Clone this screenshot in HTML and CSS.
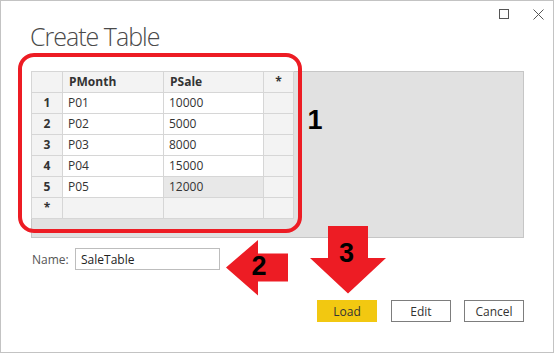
FILE: index.html
```html
<!DOCTYPE html>
<html lang="en">
<head>
    <meta charset="UTF-8">
    <title>Create Table</title>
    <link rel="stylesheet" href="styles.css">
</head>
<body>
    <div class="dialog">
        <div class="titlebar">
            <svg class="win-btn" width="10" height="10" viewBox="0 0 10 10">
                <rect x="0.5" y="0.5" width="9" height="9" fill="none" stroke="#555" stroke-width="1"/>
            </svg>
            <svg class="win-btn" width="11" height="11" viewBox="0 0 11 11">
                <path d="M0.5 0.5 L10.5 10.5 M10.5 0.5 L0.5 10.5" stroke="#555" stroke-width="1"/>
            </svg>
        </div>

        <h1 class="title">Create Table</h1>

        <div class="panel">
            <div class="grid">
                <div class="cell head"></div>
                <div class="cell head col">PMonth</div>
                <div class="cell head col">PSale</div>
                <div class="cell head star">*</div>

                <div class="cell head num">1</div>
                <div class="cell">P01</div>
                <div class="cell">10000</div>
                <div class="cell head"></div>

                <div class="cell head num">2</div>
                <div class="cell">P02</div>
                <div class="cell">5000</div>
                <div class="cell head"></div>

                <div class="cell head num">3</div>
                <div class="cell">P03</div>
                <div class="cell">8000</div>
                <div class="cell head"></div>

                <div class="cell head num">4</div>
                <div class="cell">P04</div>
                <div class="cell">15000</div>
                <div class="cell head"></div>

                <div class="cell head num">5</div>
                <div class="cell">P05</div>
                <div class="cell selected">12000</div>
                <div class="cell head"></div>

                <div class="cell head star">*</div>
                <div class="cell head"></div>
                <div class="cell head"></div>
                <div class="cell head"></div>
            </div>
        </div>

        <div class="name-row">
            <label for="nombre">Name:</label>
            <input type="text" id="nombre" value="SaleTable">
        </div>

        <div class="botones">
            <button type="button" class="btn btn-load">Load</button>
            <button type="button" class="btn">Edit</button>
            <button type="button" class="btn">Cancel</button>
        </div>

        <!-- marcas rojas encima del dialogo -->
        <svg class="marcas" width="555" height="353" viewBox="0 0 555 353">
            <rect x="20" y="55" width="280" height="176" rx="14" ry="14" fill="none" stroke="#ed1c24" stroke-width="4"/>
            <text x="315" y="129" class="numero" text-anchor="middle">1</text>

            <polygon points="226,267.5 258,240 258,253.5 288,253.5 288,281.5 258,281.5 258,295.5" fill="#ed1c24"/>
            <text x="259" y="275" class="numero" text-anchor="middle">2</text>

            <polygon points="328,226 368,226 368,258 386,258 348,293.5 310,258 328,258" fill="#ed1c24"/>
            <text x="346.5" y="262" class="numero" text-anchor="middle">3</text>
        </svg>
    </div>
</body>
</html>
```

FILE: styles.css
```css
body {
    margin: 0;
    font-family: "Open Sans", Arial, sans-serif;
    font-size: 12px;
    color: #333;
    background: #fff;
}

.dialog {
    position: relative;
    width: 554px;
    height: 353px;
    box-sizing: border-box;
    border: 1px solid #c3c3c3;
    background: #fff;
}

.titlebar {
    display: flex;
    justify-content: flex-end;
    align-items: flex-start;
    gap: 24px;
    height: 18px;
    padding: 8px 9px 0 0;
    box-sizing: border-box;
}

.title {
    margin: 1px 0 0 29px;
    font-size: 25px;
    font-weight: 300;
    line-height: 32px;
    color: #4a4a4a;
    letter-spacing: -1px;
}

.panel {
    width: 493px;
    height: 167px;
    margin: 19px 0 0 30px;
    box-sizing: border-box;
    border: 1px solid #c6c6c6;
    background-color: #e1e1e1;
}

.grid {
    display: grid;
    grid-template-columns: 30px 100px 99px 29px;
    grid-auto-rows: 20px;
    gap: 1px;
    padding: 1px;
    margin: -1px 0 0 -1px;
    width: max-content;
    background-color: #d6d6d6;
}

.cell {
    background-color: #fff;
    line-height: 20px;
    padding: 0 5px;
    white-space: nowrap;
}

.head {
    background-color: #f3f3f3;
}

.col {
    font-weight: bold;
    padding-left: 6px;
}

.num,
.star {
    text-align: center;
    font-weight: bold;
    padding: 0;
}

.selected {
    background-color: #e8e8e8;
}

.name-row {
    display: flex;
    align-items: center;
    margin: 10px 0 0 31px;
}

.name-row label {
    width: 43px;
    color: #555;
}

.name-row input {
    width: 145px;
    height: 22px;
    box-sizing: border-box;
    border: 1px solid #bdbdbd;
    padding: 0 5px;
    font-family: "Open Sans", Arial, sans-serif;
    font-size: 12px;
    color: #222;
    outline: none;
}

.botones {
    display: flex;
    justify-content: flex-end;
    gap: 13px;
    margin: 30px 29px 0 0;
}

.btn {
    width: 60px;
    height: 22px;
    box-sizing: border-box;
    border: 1px solid #7d7d7d;
    background-color: #fff;
    font-family: "Open Sans", Arial, sans-serif;
    font-size: 12px;
    color: #333;
    padding: 0;
    cursor: pointer;
}

.btn-load {
    border-color: #f2c811;
    background-color: #f2c811;
    margin-right: 1px;
}

.marcas {
    position: absolute;
    top: -1px;
    left: -1px;
    pointer-events: none;
}

.numero {
    font-family: "Liberation Sans", Arial, sans-serif;
    font-weight: bold;
    font-size: 27px;
    fill: #000;
}
```
